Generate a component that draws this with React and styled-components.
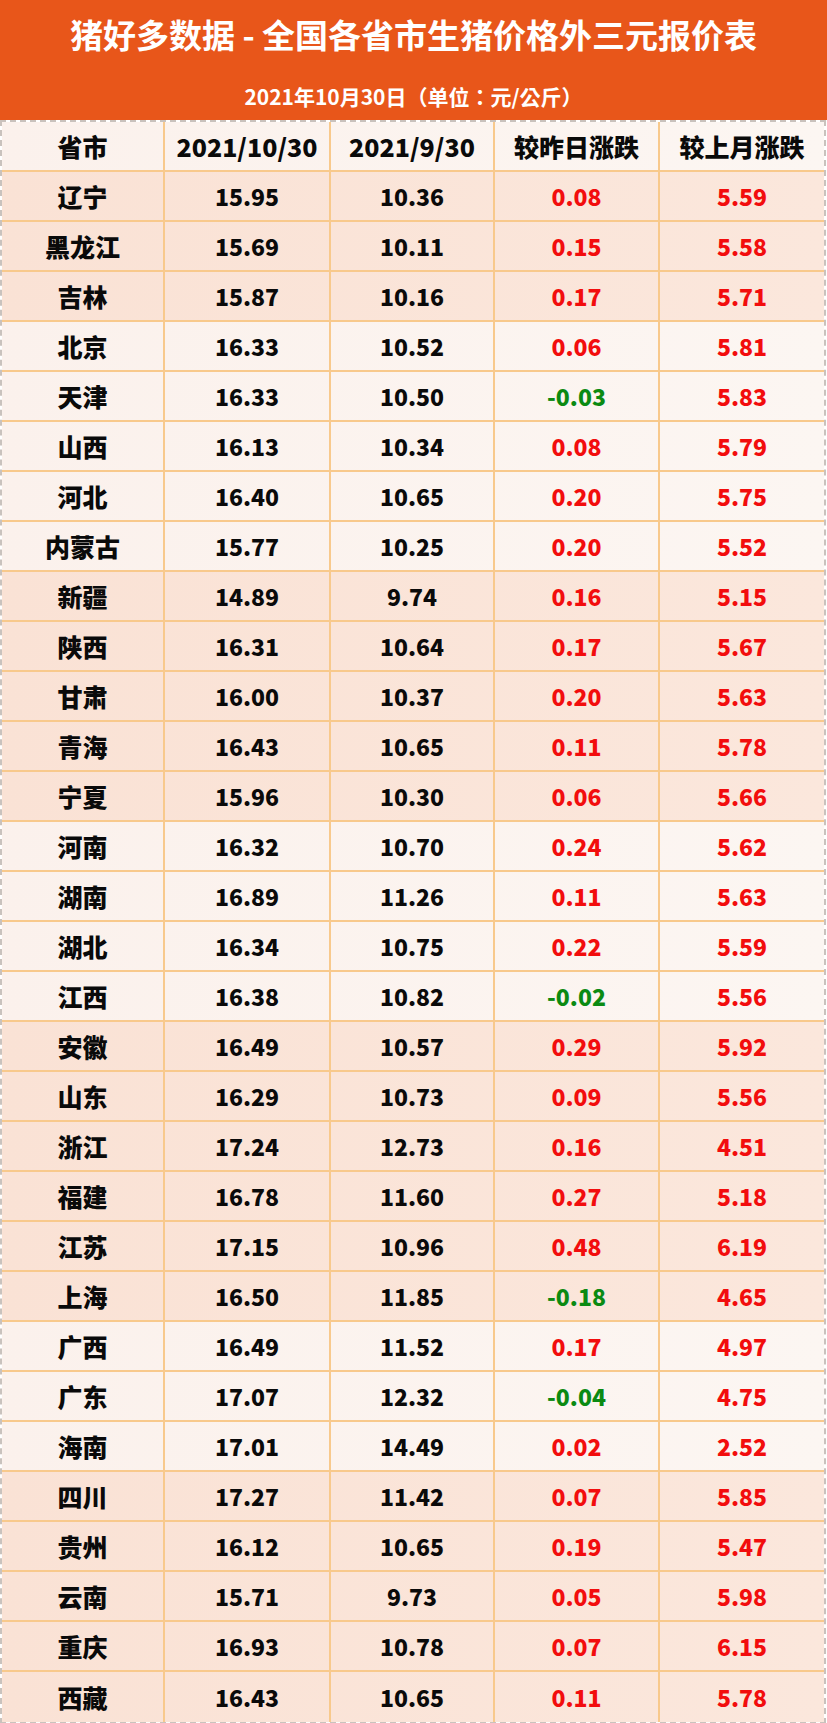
import React from "react";
import styled, { createGlobalStyle } from "styled-components";

const Global = createGlobalStyle`
  html, body { margin: 0; padding: 0; background: #ffffff; }
  body { font-family: "Noto Sans CJK SC", "Noto Sans", sans-serif; }
`;

const Page = styled.div`
  width: 827px;
  background: #ffffff;
`;

const Banner = styled.header`
  height: 120px;
  background: #e8561a;
  color: #ffffff;
  display: flex;
  flex-direction: column;
  align-items: center;
  box-sizing: border-box;
  padding-top: 13px;
`;

const Title = styled.h1`
  margin: 0;
  font-size: 33px;
  line-height: 42px;
  font-weight: 700;
`;

const Subtitle = styled.div`
  margin-top: 28px;
  font-family: "Noto Sans CJK TC", "Noto Sans CJK SC", sans-serif;
  font-size: 21px;
  line-height: 26px;
  font-weight: 700;
`;

const Table = styled.div`
  width: 826px;
  box-sizing: border-box;
  border: 2px dashed #c9c2bd;
`;

const Row = styled.div`
  display: grid;
  grid-template-columns: 163px 166px 164px 165px 1fr;
  height: 50px;
  box-sizing: border-box;
  border-bottom: ${(p) => (p.$last ? "none" : "2px solid #f8c98c")};
  background: ${(p) =>
    p.$tone === "peach"
      ? "linear-gradient(90deg, #fae2d5 0%, #fbe7dc 100%)"
      : "linear-gradient(90deg, #fbf1ec 0%, #fcf6f2 100%)"};
`;

const Cell = styled.div`
  display: flex;
  align-items: center;
  justify-content: center;
  font-size: ${(p) => (p.$cjk ? "25px" : "23px")};
  font-weight: 800;
  color: ${(p) => (p.$color === "red" ? "#f20d0d" : p.$color === "green" ? "#0b8a12" : "#0a0a0a")};
  border-right: ${(p) => (p.$end ? "none" : "2px solid #f8c98c")};
  line-height: 1;
  white-space: nowrap;
`;

const data = [
  ["辽宁", "15.95", "10.36", "0.08", "5.59", "peach"],
  ["黑龙江", "15.69", "10.11", "0.15", "5.58", "peach"],
  ["吉林", "15.87", "10.16", "0.17", "5.71", "peach"],
  ["北京", "16.33", "10.52", "0.06", "5.81", "light"],
  ["天津", "16.33", "10.50", "-0.03", "5.83", "light"],
  ["山西", "16.13", "10.34", "0.08", "5.79", "light"],
  ["河北", "16.40", "10.65", "0.20", "5.75", "light"],
  ["内蒙古", "15.77", "10.25", "0.20", "5.52", "light"],
  ["新疆", "14.89", "9.74", "0.16", "5.15", "peach"],
  ["陕西", "16.31", "10.64", "0.17", "5.67", "peach"],
  ["甘肃", "16.00", "10.37", "0.20", "5.63", "peach"],
  ["青海", "16.43", "10.65", "0.11", "5.78", "peach"],
  ["宁夏", "15.96", "10.30", "0.06", "5.66", "peach"],
  ["河南", "16.32", "10.70", "0.24", "5.62", "light"],
  ["湖南", "16.89", "11.26", "0.11", "5.63", "light"],
  ["湖北", "16.34", "10.75", "0.22", "5.59", "light"],
  ["江西", "16.38", "10.82", "-0.02", "5.56", "light"],
  ["安徽", "16.49", "10.57", "0.29", "5.92", "peach"],
  ["山东", "16.29", "10.73", "0.09", "5.56", "peach"],
  ["浙江", "17.24", "12.73", "0.16", "4.51", "peach"],
  ["福建", "16.78", "11.60", "0.27", "5.18", "peach"],
  ["江苏", "17.15", "10.96", "0.48", "6.19", "peach"],
  ["上海", "16.50", "11.85", "-0.18", "4.65", "peach"],
  ["广西", "16.49", "11.52", "0.17", "4.97", "light"],
  ["广东", "17.07", "12.32", "-0.04", "4.75", "light"],
  ["海南", "17.01", "14.49", "0.02", "2.52", "light"],
  ["四川", "17.27", "11.42", "0.07", "5.85", "peach"],
  ["贵州", "16.12", "10.65", "0.19", "5.47", "peach"],
  ["云南", "15.71", "9.73", "0.05", "5.98", "peach"],
  ["重庆", "16.93", "10.78", "0.07", "6.15", "peach"],
  ["西藏", "16.43", "10.65", "0.11", "5.78", "peach"],
];

const heads = ["省市", "2021/10/30", "2021/9/30", "较昨日涨跌", "较上月涨跌"];

export default function App() {
  return (
    <Page>
      <Global />
      <Banner>
        <Title>猪好多数据 - 全国各省市生猪价格外三元报价表</Title>
        <Subtitle>2021年10月30日（单位：元/公斤）</Subtitle>
      </Banner>
      <Table>
        <Row $tone="light">
          {heads.map((h, i) => (
            <Cell key={h} $cjk $end={i === 4}>
              {h}
            </Cell>
          ))}
        </Row>
        {data.map((r, idx) => (
          <Row key={r[0]} $tone={r[5]} $last={idx === data.length - 1}>
            <Cell $cjk>{r[0]}</Cell>
            <Cell>{r[1]}</Cell>
            <Cell>{r[2]}</Cell>
            <Cell $color={r[3].startsWith("-") ? "green" : "red"}>{r[3]}</Cell>
            <Cell $color="red" $end>
              {r[4]}
            </Cell>
          </Row>
        ))}
      </Table>
    </Page>
  );
}
